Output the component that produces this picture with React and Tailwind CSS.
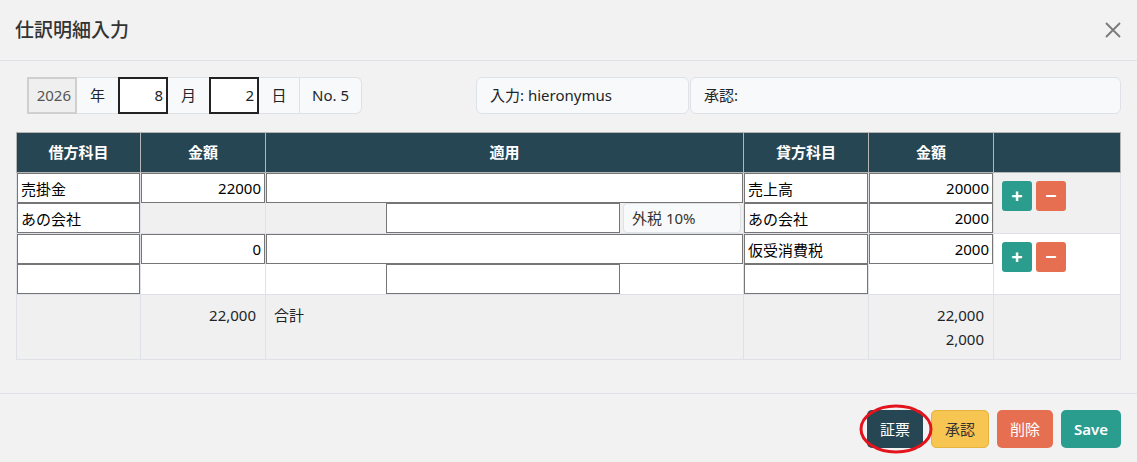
import React from "react";

const font = { fontFamily: '"Noto Sans", "Noto Sans CJK JP", sans-serif' };

const cellInput =
  "block w-full h-[30px] border border-[#767676] bg-white px-[3px] text-[15px] text-black outline-none";

function Field({ value = "", right = false }) {
  return (
    <input
      readOnly
      value={value}
      className={cellInput + (right ? " text-right" : "")}
    />
  );
}

function TaxLine({ label }) {
  return (
    <div className="flex h-[30px] items-stretch justify-end gap-[3px] pr-[2px]">
      <input readOnly className="h-[30px] w-[234px] border border-[#767676] bg-white" />
      <div
        className={
          "flex w-[118px] items-center rounded-[4px] px-2 text-[15px] text-[#333] " +
          (label ? "border border-[#dee2e6] bg-[#f8f9fa]" : "")
        }
      >
        {label}
      </div>
    </div>
  );
}

function RowButtons() {
  return (
    <div className="flex gap-1 px-2 pt-2">
      <button className="flex h-[30px] w-[30px] items-center justify-center rounded-[3px] bg-[#2a9d8f] text-[20px] font-bold leading-none text-white">
        +
      </button>
      <button className="flex h-[30px] w-[30px] items-center justify-center rounded-[3px] bg-[#e76f51] text-[20px] font-bold leading-none text-white">
        −
      </button>
    </div>
  );
}

const th = "h-[40px] border border-[#b5b5b5] bg-[#264653] text-center text-[15px] font-bold text-white";
const td = "border border-[#dee2e6] p-0 align-top";

export default function App() {
  return (
    <div className="h-[462px] w-[1137px] overflow-hidden bg-[#f2f2f2] text-[#212529]" style={font}>
      {/* header */}
      <div className="flex h-[61px] items-center justify-between border-b border-[#dee2e6] pl-[15px] pr-[15px]">
        <h2 className="text-[19px] font-medium text-[#333]">仕訳明細入力</h2>
        <svg width="18" height="18" viewBox="0 0 18 18" className="text-[#7a7a7a]">
          <path d="M2 2 L16 16 M16 2 L2 16" stroke="currentColor" strokeWidth="1.8" fill="none" />
        </svg>
      </div>

      {/* body */}
      <div className="px-[16px] pt-[16px]">
        <div className="flex h-[37px] pl-[11px] text-[15px]">
          <div className="flex">
            <div className="flex w-[50px] items-center justify-end border-2 border-[#cfcfcf] bg-[#efefef] pr-[4px] text-[#555]">
              2026
            </div>
            <div className="flex w-[41px] items-center justify-center border-y border-[#dee2e6] bg-[#f8f9fa]">年</div>
            <div className="flex w-[50px] items-center justify-end border-2 border-[#222] bg-white pr-[3px]">8</div>
            <div className="flex w-[41px] items-center justify-center border-y border-[#dee2e6] bg-[#f8f9fa]">月</div>
            <div className="flex w-[50px] items-center justify-end border-2 border-[#222] bg-white pr-[3px]">2</div>
            <div className="flex w-[41px] items-center justify-center border-y border-r border-[#dee2e6] bg-[#f8f9fa]">日</div>
            <div className="flex w-[62px] items-center justify-center rounded-r-[6px] border-y border-r border-[#dee2e6] bg-[#f8f9fa]">
              No. 5
            </div>
          </div>
          <div className="ml-[114px] flex w-[213px] items-center rounded-[6px] border border-[#dee2e6] bg-[#f8f9fa] px-[13px]">
            入力: hieronymus
          </div>
          <div className="ml-px flex flex-1 items-center rounded-[6px] border border-[#dee2e6] bg-[#f8f9fa] px-[13px]">
            承認:
          </div>
        </div>

        <table className="mt-[18px] w-[1104px] table-fixed border-collapse text-[15px]">
          <colgroup>
            <col className="w-[124px]" />
            <col className="w-[125px]" />
            <col className="w-[478px]" />
            <col className="w-[125px]" />
            <col className="w-[125px]" />
            <col className="w-[127px]" />
          </colgroup>
          <thead>
            <tr>
              <th className={th}>借方科目</th>
              <th className={th}>金額</th>
              <th className={th}>適用</th>
              <th className={th}>貸方科目</th>
              <th className={th}>金額</th>
              <th className={th}></th>
            </tr>
          </thead>
          <tbody>
            <tr className="bg-[#f0f0f0]">
              <td className={td}>
                <Field value="売掛金" />
                <Field value="あの会社" />
              </td>
              <td className={td}>
                <Field value="22000" right />
              </td>
              <td className={td}>
                <Field />
                <TaxLine label="外税 10%" />
              </td>
              <td className={td}>
                <Field value="売上高" />
                <Field value="あの会社" />
              </td>
              <td className={td}>
                <Field value="20000" right />
                <Field value="2000" right />
              </td>
              <td className={td}>
                <RowButtons />
              </td>
            </tr>
            <tr className="bg-white">
              <td className={td}>
                <Field />
                <Field />
              </td>
              <td className={td}>
                <Field value="0" right />
              </td>
              <td className={td}>
                <Field />
                <TaxLine />
              </td>
              <td className={td}>
                <Field value="仮受消費税" />
                <Field />
              </td>
              <td className={td}>
                <Field value="2000" right />
              </td>
              <td className={td}>
                <RowButtons />
              </td>
            </tr>
            <tr className="h-[65px] bg-[#f0f0f0] leading-[24px]">
              <td className={td}></td>
              <td className={td + " pr-[9px] pt-[8px] text-right"}>22,000</td>
              <td className={td + " pl-[8px] pt-[8px]"}>合計</td>
              <td className={td}></td>
              <td className={td + " pr-[9px] pt-[8px] text-right"}>
                <div>22,000</div>
                <div>2,000</div>
              </td>
              <td className={td}></td>
            </tr>
          </tbody>
        </table>
      </div>

      {/* footer */}
      <div className="mt-[33px] flex justify-end gap-2 border-t border-[#dee2e6] pr-[16px] pt-[16px] text-[15px]">
        <span className="relative">
          <button className="h-[38px] rounded-[5px] bg-[#264653] px-[13px] text-white">証票</button>
          <svg
            className="pointer-events-none absolute left-[-8px] top-[-6px]"
            width="74"
            height="50"
            viewBox="0 0 74 50"
          >
            <ellipse cx="37" cy="25" rx="35" ry="23" fill="none" stroke="#e3141c" strokeWidth="3" />
          </svg>
        </span>
        <button className="h-[38px] rounded-[5px] border border-[#e6b43c] bg-[#f6c552] px-[13px] text-[#333]">承認</button>
        <button className="h-[38px] rounded-[5px] bg-[#e76f51] px-[13px] text-white">削除</button>
        <button className="h-[38px] rounded-[5px] bg-[#2a9d8f] px-[13px] font-semibold text-white">Save</button>
      </div>
    </div>
  );
}
